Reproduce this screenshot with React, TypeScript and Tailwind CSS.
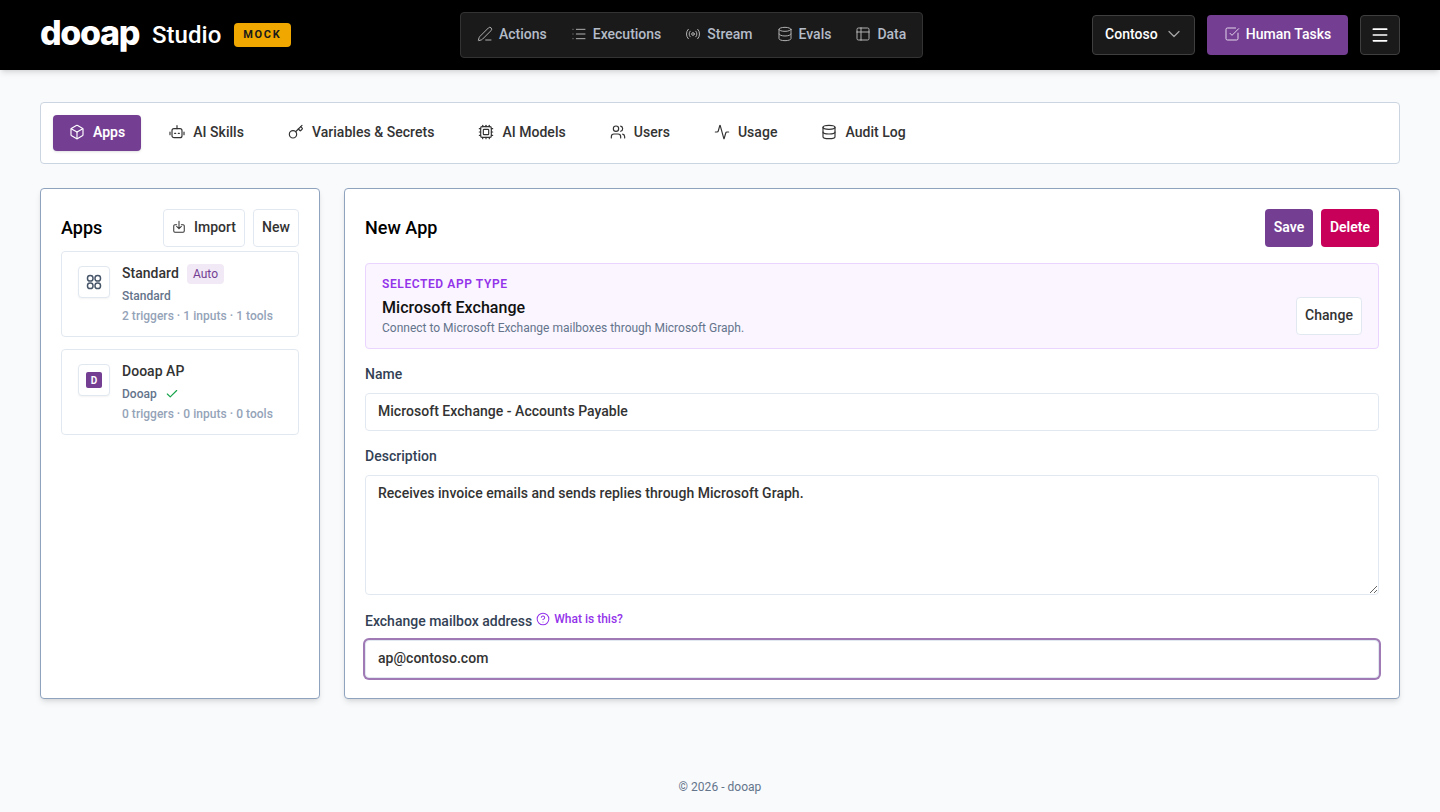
import {
  Activity,
  Box,
  Check,
  ChevronDown,
  CircleHelp,
  Cpu,
  Database,
  Key,
  List,
  Menu,
  PenLine,
  Radio,
  SquareCheckBig,
  Table2,
  Users,
} from 'lucide-react';

type IconProps = { className?: string; strokeWidth?: number };

function BotIcon({ className, strokeWidth = 1.5 }: IconProps) {
  return (
    <svg viewBox="0 0 24 24" fill="none" stroke="currentColor" strokeWidth={strokeWidth} strokeLinecap="round" className={className}>
      <path d="M12 2.5V7" />
      <rect x="4.5" y="7" width="15" height="13.5" rx="3" />
      <path d="M1.5 12v4M22.5 12v4" />
      <path d="M8.5 14h1.5M14 14h1.5" strokeWidth={2} />
    </svg>
  );
}

function TrayIcon({ className, strokeWidth = 1.75 }: IconProps) {
  return (
    <svg viewBox="0 0 24 24" fill="none" stroke="currentColor" strokeWidth={strokeWidth} strokeLinecap="round" strokeLinejoin="round" className={className}>
      <path d="M12 2v13M8 11l4 4 4-4" />
      <path d="M8 8H5a2 2 0 0 0-2 2v9a2 2 0 0 0 2 2h14a2 2 0 0 0 2-2v-9a2 2 0 0 0-2-2h-3" />
    </svg>
  );
}

function LoopsIcon({ className }: IconProps) {
  return (
    <svg viewBox="0 0 16 16" fill="none" stroke="currentColor" strokeWidth={1.5} className={className}>
      <rect x="1.5" y="1.5" width="5.5" height="5.5" rx="2.6" />
      <rect x="9" y="1.5" width="5.5" height="5.5" rx="2.6" />
      <rect x="1.5" y="9" width="5.5" height="5.5" rx="2.6" />
      <rect x="9" y="9" width="5.5" height="5.5" rx="2.6" />
    </svg>
  );
}

const topItems = [
  { label: 'Actions', icon: PenLine },
  { label: 'Executions', icon: List },
  { label: 'Stream', icon: Radio },
  { label: 'Evals', icon: Database },
  { label: 'Data', icon: Table2 },
];

const tabs = [
  { label: 'Apps', icon: Box, active: true },
  { label: 'AI Skills', icon: BotIcon },
  { label: 'Variables & Secrets', icon: Key },
  { label: 'AI Models', icon: Cpu },
  { label: 'Users', icon: Users },
  { label: 'Usage', icon: Activity },
  { label: 'Audit Log', icon: Database },
];

const fieldClass =
  'h-[38px] w-full rounded border border-[#e2e8f0] bg-white px-3 pb-0.5 text-sm font-medium text-[#333] outline-none';

function TopBar() {
  return (
    <header className="flex h-[70px] shrink-0 items-center justify-between bg-black px-10 shadow-md">
      <div className="flex items-center">
        <span className="w-[100px] -translate-y-0.5 font-['Inter',sans-serif] text-[34px] leading-none font-extrabold tracking-[-0.04em] text-white">
          dooap
        </span>
        <span className="ml-3 text-2xl font-medium text-white">Studio</span>
        <span className="ml-[13px] flex h-6 w-[57px] items-center justify-center rounded bg-[#f0a800] pr-px text-[11px] font-bold tracking-[0.15em] text-[#1a1a1a]">
          MOCK
        </span>
      </div>

      <nav className="flex h-[46px] w-[463px] items-center justify-center rounded border border-[#333] bg-[#1a1a1a] pb-0.5 tracking-normal">
        {topItems.map((item) => (
          <a key={item.label} className="flex items-center gap-1.5 px-3 text-sm leading-[21px] font-medium text-[#b4bcc8]">
            <item.icon className="h-4 w-4 text-[#b0b0b0]" strokeWidth={1.5} />
            {item.label}
          </a>
        ))}
      </nav>

      <div className="flex w-[308px] items-center gap-3">
        <button className="flex h-10 w-[103px] items-center gap-1.5 rounded border border-[#3f3f3f] bg-[#1a1a1a] pb-0.5 pl-3 text-sm leading-[21px] font-medium text-white">
          Contoso
          <ChevronDown className="h-5 w-5 text-[#a3a3a3]" strokeWidth={1.5} />
        </button>
        <button className="flex h-10 w-[141px] items-center justify-center gap-1.5 rounded bg-[#743e93] pb-0.5 text-sm leading-[21px] font-medium text-white">
          <SquareCheckBig className="h-4 w-4 text-[#e3d6ea]" strokeWidth={1.5} />
          Human Tasks
        </button>
        <button className="flex h-10 w-10 items-center justify-center rounded border border-[#3f3f3f] bg-[#1a1a1a] text-white">
          <Menu className="h-5 w-5" strokeWidth={2} />
        </button>
      </div>
    </header>
  );
}

function AppCard({
  icon,
  name,
  badge,
  sub,
  verified,
  meta,
}: {
  icon: React.ReactNode;
  name: string;
  badge?: string;
  sub: string;
  verified?: boolean;
  meta: string;
}) {
  return (
    <div className="flex h-[86px] gap-3 rounded border border-[#e2e8f0] bg-white px-4 py-3">
      <div className="mt-0.5 flex h-8 w-8 items-center justify-center rounded border border-[#e2e8f0] bg-white shadow-xs">
        {icon}
      </div>
      <div className="min-w-0">
        <div className="flex h-5 items-center gap-2 text-sm leading-[21px] font-medium text-[#333]">
          <span className="pb-0.5">{name}</span>
          {badge && (
            <span className="rounded bg-[#f1e9f5] px-[6px] py-0.5 text-xs font-normal text-[#743e93]">{badge}</span>
          )}
        </div>
        <div className="mt-0.5 flex h-5 items-center gap-2 text-xs font-medium text-[#64748b]">
          {sub}
          {verified && <Check className="h-3.5 w-3.5 text-[#16a34a]" strokeWidth={2} />}
        </div>
        <div className="text-xs leading-5 font-medium text-[#94a3b8]">{meta}</div>
      </div>
    </div>
  );
}

function AppsPanel() {
  return (
    <aside className="w-[280px] shrink-0 rounded border border-[#8fa3bf] bg-white p-5 shadow-md">
      <div className="flex items-center justify-between">
        <h2 className="text-lg font-medium text-black">Apps</h2>
        <div className="flex gap-2">
          <button className="flex h-[38px] w-[82px] items-center justify-center gap-2 rounded border border-[#e2e8f0] pb-0.5 text-sm leading-[21px] font-medium text-[#333]">
            <TrayIcon className="h-3.5 w-3.5" />
            Import
          </button>
          <button className="h-[38px] w-[46px] rounded border border-[#e2e8f0] pb-0.5 text-sm leading-[21px] font-medium text-[#333]">
            New
          </button>
        </div>
      </div>
      <div className="mt-1 flex flex-col gap-3">
        <AppCard
          icon={<LoopsIcon className="h-4 w-4 text-[#475569]" />}
          name="Standard"
          badge="Auto"
          sub="Standard"
          meta="2 triggers · 1 inputs · 1 tools"
        />
        <AppCard
          icon={
            <span className="flex h-4 w-4 items-center justify-center rounded-[2px] bg-[#743e93] text-[10px] font-bold text-white">
              D
            </span>
          }
          name="Dooap AP"
          sub="Dooap"
          verified
          meta="0 triggers · 0 inputs · 0 tools"
        />
      </div>
    </aside>
  );
}

function EditorPanel() {
  return (
    <section className="min-w-0 flex-1 rounded border border-[#8fa3bf] bg-white p-5 shadow-md">
      <div className="flex items-center justify-between">
        <h2 className="text-lg font-medium text-black">New App</h2>
        <div className="flex gap-2">
          <button className="h-[38px] w-12 rounded bg-[#743e93] pb-0.5 text-sm leading-[21px] font-semibold text-white">Save</button>
          <button className="h-[38px] w-[58px] rounded bg-[#c8005a] pb-0.5 text-sm leading-[21px] font-semibold text-white">Delete</button>
        </div>
      </div>

      <div className="mt-4 flex h-[86px] items-end justify-between rounded border border-[#e9d5ff] bg-[#faf5ff] pt-[13px] pr-4 pb-[13px] pl-4">
        <div className="translate-y-px">
          <div className="text-xs leading-4 font-semibold tracking-[0.05em] text-[#9333ea]">SELECTED APP TYPE</div>
          <div className="mt-1 text-base leading-6 font-medium text-[#111]">Microsoft Exchange</div>
          <div className="text-xs leading-4 tracking-normal text-[#64748b]">
            Connect to Microsoft Exchange mailboxes through Microsoft Graph.
          </div>
        </div>
        <button className="h-[38px] w-[66px] rounded border border-[#e2e8f0] bg-white pb-0.5 text-sm leading-[21px] font-medium text-[#333]">
          Change
        </button>
      </div>

      <label className="mt-[15px] mb-[9px] block text-sm leading-5 font-medium text-[#334155]">Name</label>
      <input className={fieldClass} readOnly value="Microsoft Exchange - Accounts Payable" />

      <label className="mt-[15px] mb-[9px] block text-sm leading-5 font-medium text-[#334155]">Description</label>
      <textarea
        className="block h-[120px] w-full rounded border border-[#e2e8f0] bg-white px-3 pt-[7px] pb-2 text-sm leading-5 font-medium text-[#333] outline-none"
        readOnly
        value="Receives invoice emails and sends replies through Microsoft Graph."
      />

      <div className="mt-4 mb-[9px] flex h-5 items-center gap-1 text-sm font-medium tracking-normal text-[#334155]">
        Exchange mailbox address
        <span className="flex -translate-y-0.5 items-center gap-1 text-xs font-medium text-[#9333ea]">
          <CircleHelp className="h-3.5 w-3.5" strokeWidth={1.75} />
          What is this?
        </span>
      </div>
      <input className={`${fieldClass} ring-2 ring-[#9f7ab5]`} readOnly value="ap@contoso.com" />
    </section>
  );
}

export default function App() {
  return (
    <div className="flex min-h-screen flex-col bg-[#f8fafc] font-['Roboto',sans-serif] tracking-[0.03px]">
      <TopBar />
      <main className="flex flex-1 flex-col px-10 pt-8">
        <div className="flex h-[62px] items-center gap-3 rounded border border-[#cbd5e1] bg-white px-3">
          {tabs.map((tab) => (
            <a
              key={tab.label}
              className={`flex h-9 items-center gap-2 rounded px-4 pb-0.5 text-sm leading-[21px] font-medium ${
                tab.active ? 'bg-[#743e93] font-semibold text-white shadow-sm' : 'text-[#333]'
              }`}
            >
              <tab.icon className="h-4 w-4" strokeWidth={1.75} />
              {tab.label}
            </a>
          ))}
        </div>
        <div className="mt-6 flex h-[511px] gap-6">
          <AppsPanel />
          <EditorPanel />
        </div>
      </main>
      <footer className="pb-[17px] text-center text-xs leading-4 text-[#64748b]">© 2026 - dooap</footer>
    </div>
  );
}
